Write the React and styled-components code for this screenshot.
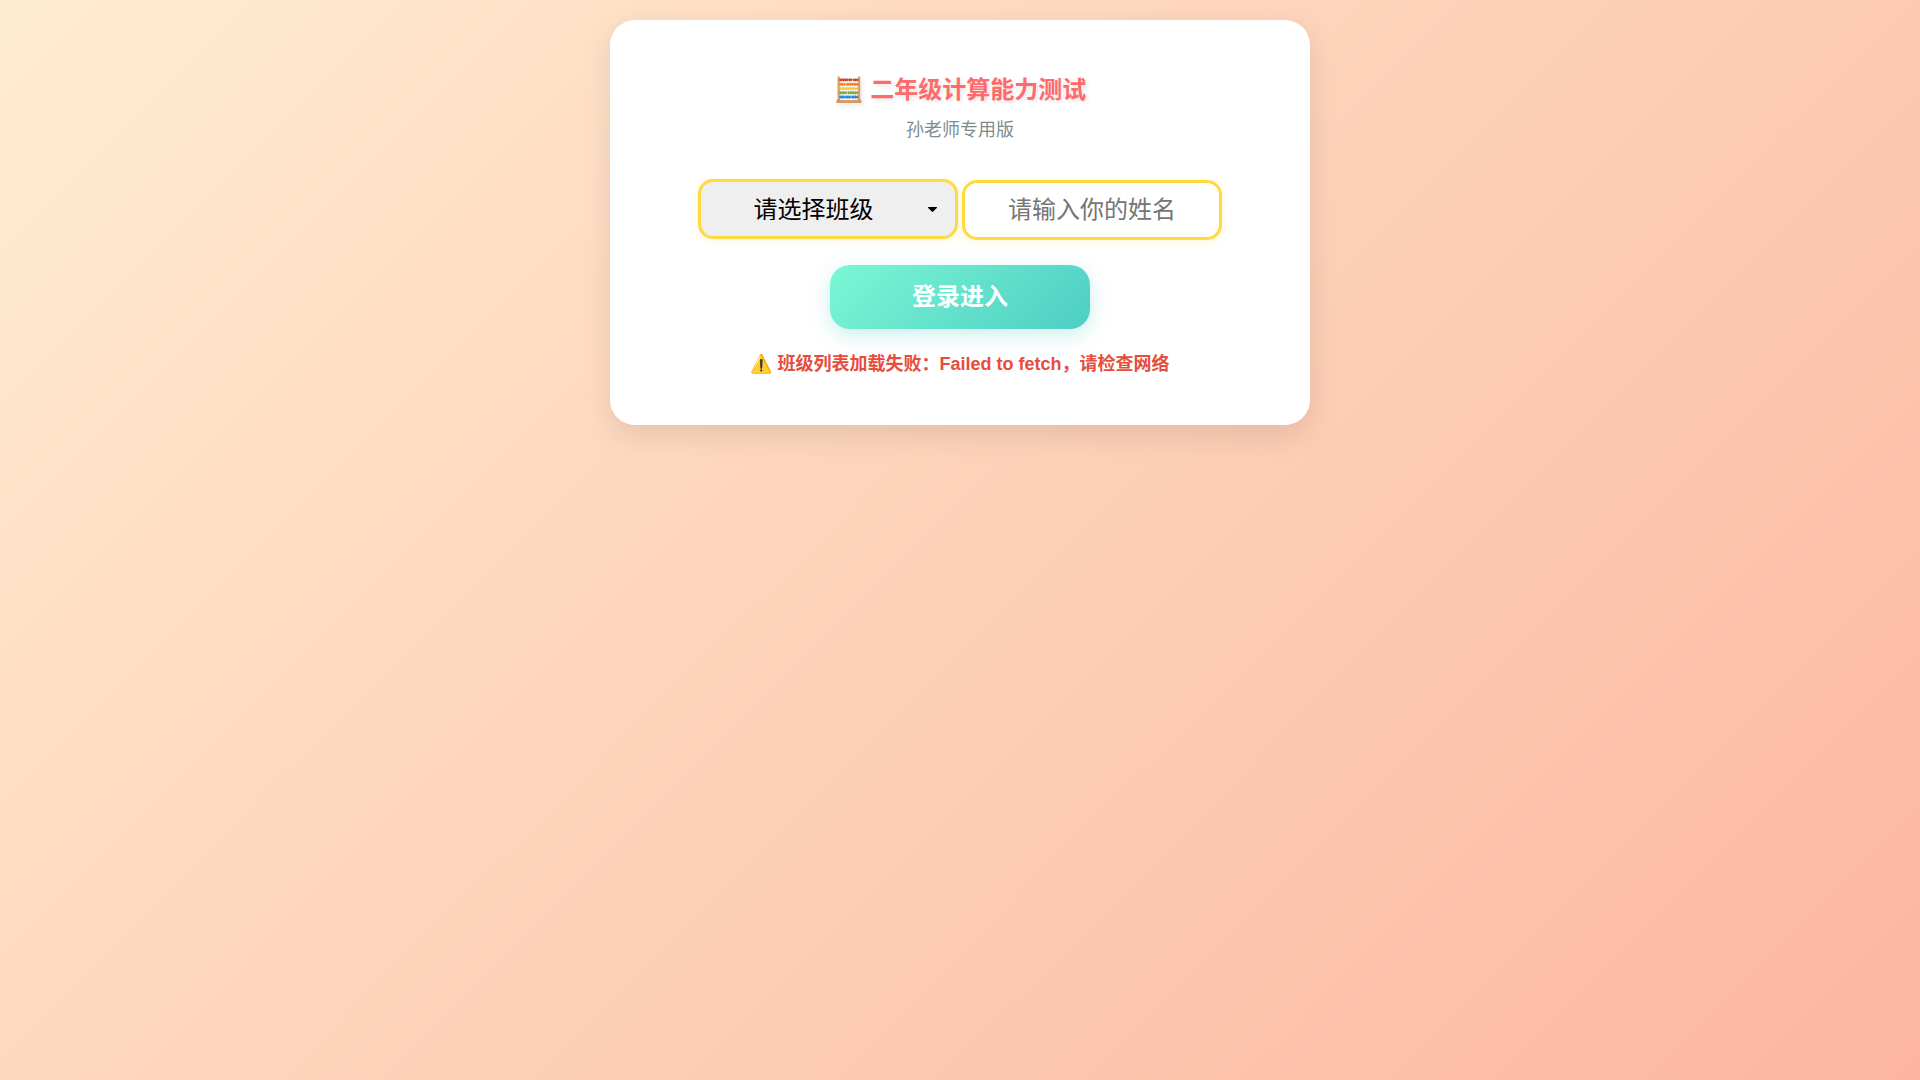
import React from 'react';
import styled, { createGlobalStyle } from 'styled-components';

const GlobalStyle = createGlobalStyle`
  * {
    box-sizing: border-box;
  }

  html,
  body {
    margin: 0;
    min-height: 100%;
  }

  body {
    font-family: "Liberation Sans", "Noto Sans CJK SC", sans-serif;
  }
`;

const Page = styled.div`
  min-height: 100vh;
  padding: 20px;
  background: linear-gradient(135deg, #ffecd2 0%, #fcb69f 100%);
`;

const Card = styled.main`
  width: 700px;
  margin: 0 auto;
  padding: 40px;
  background: #fff;
  border-radius: 25px;
  box-shadow: 0 10px 30px rgba(0, 0, 0, 0.1);
  text-align: center;
`;

const Header = styled.header`
  margin-bottom: 36px;
`;

const Title = styled.h1`
  margin: 12px 0 10px;
  font-size: 24px;
  line-height: 35px;
  font-weight: 700;
  color: #ff6b6b;
  text-shadow: 2px 2px 4px rgba(0, 0, 0, 0.1);
`;

const Subtitle = styled.p`
  margin: 0;
  font-size: 18px;
  line-height: 26px;
  color: #7f8c8d;
`;

const Fields = styled.div`
  display: flex;
  justify-content: center;
  align-items: flex-start;
  gap: 4px;
`;

const fieldStyles = `
  width: 260px;
  height: 60px;
  padding: 15px;
  border: 3px solid #ffd93d;
  border-radius: 15px;
  font-family: inherit;
  font-size: 24px;
  text-align: center;
  box-shadow: 0 2px 8px rgba(255, 217, 61, 0.2);
`;

// small rounded triangle, same as the native arrow on the reference
const arrow = `url("data:image/svg+xml,%3Csvg xmlns='http://www.w3.org/2000/svg' width='9' height='5' viewBox='0 0 9 5'%3E%3Cpath d='M0.6 0h7.8a.6.6 0 0 1 .42 1L4.9 4.8a.6.6 0 0 1-.8 0L.18 1A.6.6 0 0 1 .6 0z' fill='%23000'/%3E%3C/svg%3E")`;

const ClassSelect = styled.select`
  ${fieldStyles}
  padding: 14px 44px 16px 15px;
  appearance: none;
  background: #efefef ${arrow} no-repeat right 18px top 25px;
  color: #000;
`;

const NameInput = styled.input`
  ${fieldStyles}
  margin-top: 1px;
  background: #fff;
  outline: none;

  &::placeholder {
    color: #757575;
  }
`;

const LoginButton = styled.button`
  display: block;
  width: 260px;
  height: 64px;
  margin: 25px auto 0;
  padding: 0 0 6px;
  border: none;
  border-radius: 20px;
  background: linear-gradient(135deg, #7bf7d4 0%, #4ecdc4 100%);
  box-shadow: 0 6px 20px rgba(78, 205, 196, 0.3);
  font-family: inherit;
  font-size: 24px;
  font-weight: 700;
  color: #fff;
  cursor: pointer;
`;

const ErrorText = styled.p`
  margin: 25px 0 10px;
  font-size: 18px;
  line-height: 21px;
  font-weight: 700;
  color: #e74c3c;
`;

const App = () => {
  return (
    <Page>
      <GlobalStyle />
      <Card>
        <Header>
          <Title>🧮 二年级计算能力测试</Title>
          <Subtitle>孙老师专用版</Subtitle>
        </Header>
        <Fields>
          <ClassSelect defaultValue="">
            <option value="">请选择班级</option>
          </ClassSelect>
          <NameInput type="text" placeholder="请输入你的姓名" />
        </Fields>
        <LoginButton type="button">登录进入</LoginButton>
        <ErrorText>⚠️ 班级列表加载失败：Failed to fetch，请检查网络</ErrorText>
      </Card>
    </Page>
  );
};

export default App;
